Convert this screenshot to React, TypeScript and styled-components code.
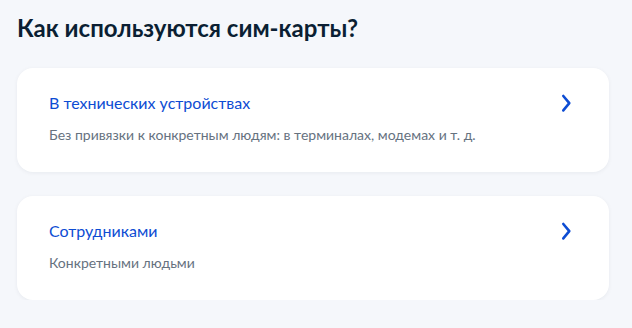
import React from "react";
import styled, { createGlobalStyle } from "styled-components";

const Global = createGlobalStyle`
  html, body { margin: 0; padding: 0; }
  body {
    background: #f5f7fb;
    font-family: Lato, "Noto Sans", sans-serif;
    -webkit-font-smoothing: antialiased;
  }
`;

const Page = styled.div`
  padding: 12px 23px 0 17px;
  display: flex;
  flex-direction: column;
`;

const Title = styled.h2`
  margin: 0 0 24px;
  font-size: 24px;
  line-height: 32px;
  font-weight: 700;
  color: #0b1f33;
`;

const List = styled.div`
  display: flex;
  flex-direction: column;
  gap: 24px;
`;

const Card = styled.a`
  display: flex;
  flex-direction: column;
  background: #fff;
  border-radius: 16px;
  padding: 23px 32px 27px;
  box-shadow: 0 1px 4px rgba(11, 31, 51, 0.06);
  text-decoration: none;
  cursor: pointer;
`;

const Row = styled.div`
  display: flex;
  align-items: center;
  justify-content: space-between;
`;

const CardTitle = styled.span`
  font-size: 16px;
  line-height: 24px;
  color: #0d4cd3;
`;

const CardText = styled.p`
  margin: 10px 0 0;
  font-size: 14px;
  line-height: 20px;
  color: #66727f;
`;

const Chevron = styled.svg`
  width: 24px;
  height: 24px;
  flex-shrink: 0;
`;

const Arrow = () => (
  <Chevron viewBox="0 0 24 24" fill="none">
    <path d="M10.3 5L16.3 12.2L10.3 19.4" stroke="#0d4cd3" strokeWidth="2.6" strokeLinecap="round" strokeLinejoin="round" />
  </Chevron>
);

const items = [
  { title: "В технических устройствах", text: "Без привязки к конкретным людям: в терминалах, модемах и т. д." },
  { title: "Сотрудниками", text: "Конкретными людьми" },
];

export default function App() {
  return (
    <>
      <Global />
      <Page>
        <Title>Как используются сим-карты?</Title>
        <List>
          {items.map((it) => (
            <Card key={it.title}>
              <Row>
                <CardTitle>{it.title}</CardTitle>
                <Arrow />
              </Row>
              <CardText>{it.text}</CardText>
            </Card>
          ))}
        </List>
      </Page>
    </>
  );
}
